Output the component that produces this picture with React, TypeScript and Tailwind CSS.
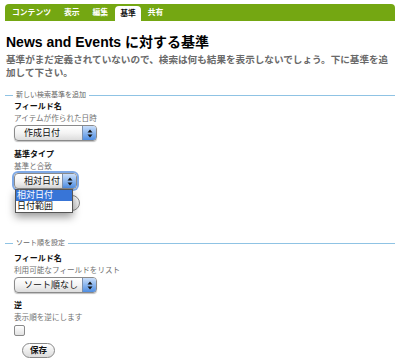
import React from "react";

const jp = { fontFamily: '"Liberation Sans", "Noto Sans CJK JP", sans-serif' };

const tabs = ["コンテンツ", "表示", "編集", "基準", "共有"];

const Arrows = () => (
	<svg width="6" height="9" viewBox="0 0 6 9" className="block">
		<path d="M3 0.5 L5.5 3.5 L0.5 3.5 Z" fill="#111" />
		<path d="M3 8.5 L5.5 5.5 L0.5 5.5 Z" fill="#111" />
	</svg>
);

const Select = ({ label, width, focus }: { label: string; width: string; focus?: boolean }) => (
	<div
		className={`${width} h-[16px] flex rounded-[4px] border border-[#8a8a8a] overflow-hidden bg-gradient-to-b from-white via-[#f4f4f4] to-[#dcdcdc] ${
			focus ? "shadow-[0_0_0_2px_#7fa9e6]" : "shadow-[0_1px_1px_rgba(0,0,0,0.25)]"
		}`}
	>
		<div className="flex-1 pl-[9px] text-[9px] leading-[14px] text-[#111]">{label}</div>
		<div className="w-[14px] flex items-center justify-center border-l border-[#7a8fae] bg-gradient-to-b from-[#c9defa] via-[#8bb6ee] to-[#4f8ee2]">
			<Arrows />
		</div>
	</div>
);

const Legend = ({ text }: { text: string }) => (
	<div className="mx-[5px] h-[10px] flex items-center">
		<div className="w-[8px] h-px bg-[#8fc3e4]" />
		<span className="px-[3px] text-[7px] leading-[10px] text-[#666]">{text}</span>
		<div className="flex-1 h-px bg-[#8fc3e4]" />
	</div>
);

const Label = ({ children, className = "" }: { children: React.ReactNode; className?: string }) => (
	<div className={`text-[8px] leading-[12px] font-bold text-[#111] ${className}`}>{children}</div>
);

const Help = ({ children }: { children: React.ReactNode }) => (
	<div className="text-[7.6px] leading-[12px] text-[#707070]">{children}</div>
);

export default function App() {
	return (
		<div className="w-[400px] h-[363px] bg-white overflow-hidden" style={jp}>
			<div className="mx-[5px] mt-[4px] h-[17px] bg-[#74a712] rounded-t-[4px] flex items-end pl-[0.5px]">
				{tabs.map((t) =>
					t === "基準" ? (
						<div
							key={t}
							className="h-[15px] px-[5.5px] rounded-t-[4px] bg-white text-[7.8px] leading-[15px] font-bold text-[#111]"
						>
							{t}
						</div>
					) : (
						<div key={t} className="h-[17px] px-[6.5px] text-[7.8px] leading-[17px] font-bold text-white">
							{t}
						</div>
					),
				)}
			</div>

			<div className="px-[6px]">
				<h1 className="mt-[12px] text-[14px] leading-[18px] font-bold text-black">
					News and Events に対する基準
				</h1>
				<p className="mt-[1.5px] text-[9.6px] leading-[13.5px] font-bold text-[#6a6a6a]">
					基準がまだ定義されていないので、検索は何も結果を表示しないでしょう。下に基準を追
					<br />
					加して下さい。
				</p>
			</div>

			<div className="mt-[10.5px]">
				<Legend text="新しい検索基準を追加" />
			</div>

			<div className="pl-[14px] relative">
				<Label className="mt-[1px]">フィールド名</Label>
				<Help>アイテムが作られた日時</Help>
				<div>
					<Select label="作成日付" width="w-[83px]" />
				</div>
				<Label className="mt-[7.5px]">基準タイプ</Label>
				<Help>基準と合致</Help>
				<div className="mt-[0.5px] relative">
					<Select label="相対日付" width="w-[63px]" focus />
					<div className="absolute left-[1px] top-[16px] w-[58px] z-10 bg-white border border-[#555] shadow-[0_4px_8px_rgba(0,0,0,0.4)]">
						<div className="h-[11px] bg-[#3875d7] text-white text-[9px] leading-[11px] pl-[1px]">相対日付</div>
						<div className="h-[11px] text-[#111] text-[9px] leading-[11px] pl-[1px]">日付範囲</div>
					</div>
				</div>
				<div className="mt-[6px] ml-[8px] w-[58px] h-[16px] rounded-full border border-[#888] bg-gradient-to-b from-white to-[#ddd]" />
			</div>

			<div className="mt-[27px]">
				<Legend text="ソート順を設定" />
			</div>

			<div className="pl-[14px]">
				<Label className="mt-[4.5px]">フィールド名</Label>
				<Help>利用可能なフィールドをリスト</Help>
				<div className="mt-[0.5px]">
					<Select label="ソート順なし" width="w-[83px]" />
				</div>
				<Label className="mt-[6.5px]">逆</Label>
				<Help>表示順を逆にします</Help>
				<div className="mt-[1.5px] w-[11px] h-[11px] rounded-[2px] border border-[#8a8a8a] bg-gradient-to-b from-white to-[#e2e2e2]" />
				<div className="mt-[7px] ml-[8px] w-[33px] h-[15px] rounded-full border border-[#888] bg-gradient-to-b from-white to-[#dcdcdc] text-[8.5px] leading-[13px] font-bold text-center text-[#111]">
					保存
				</div>
			</div>
		</div>
	);
}
